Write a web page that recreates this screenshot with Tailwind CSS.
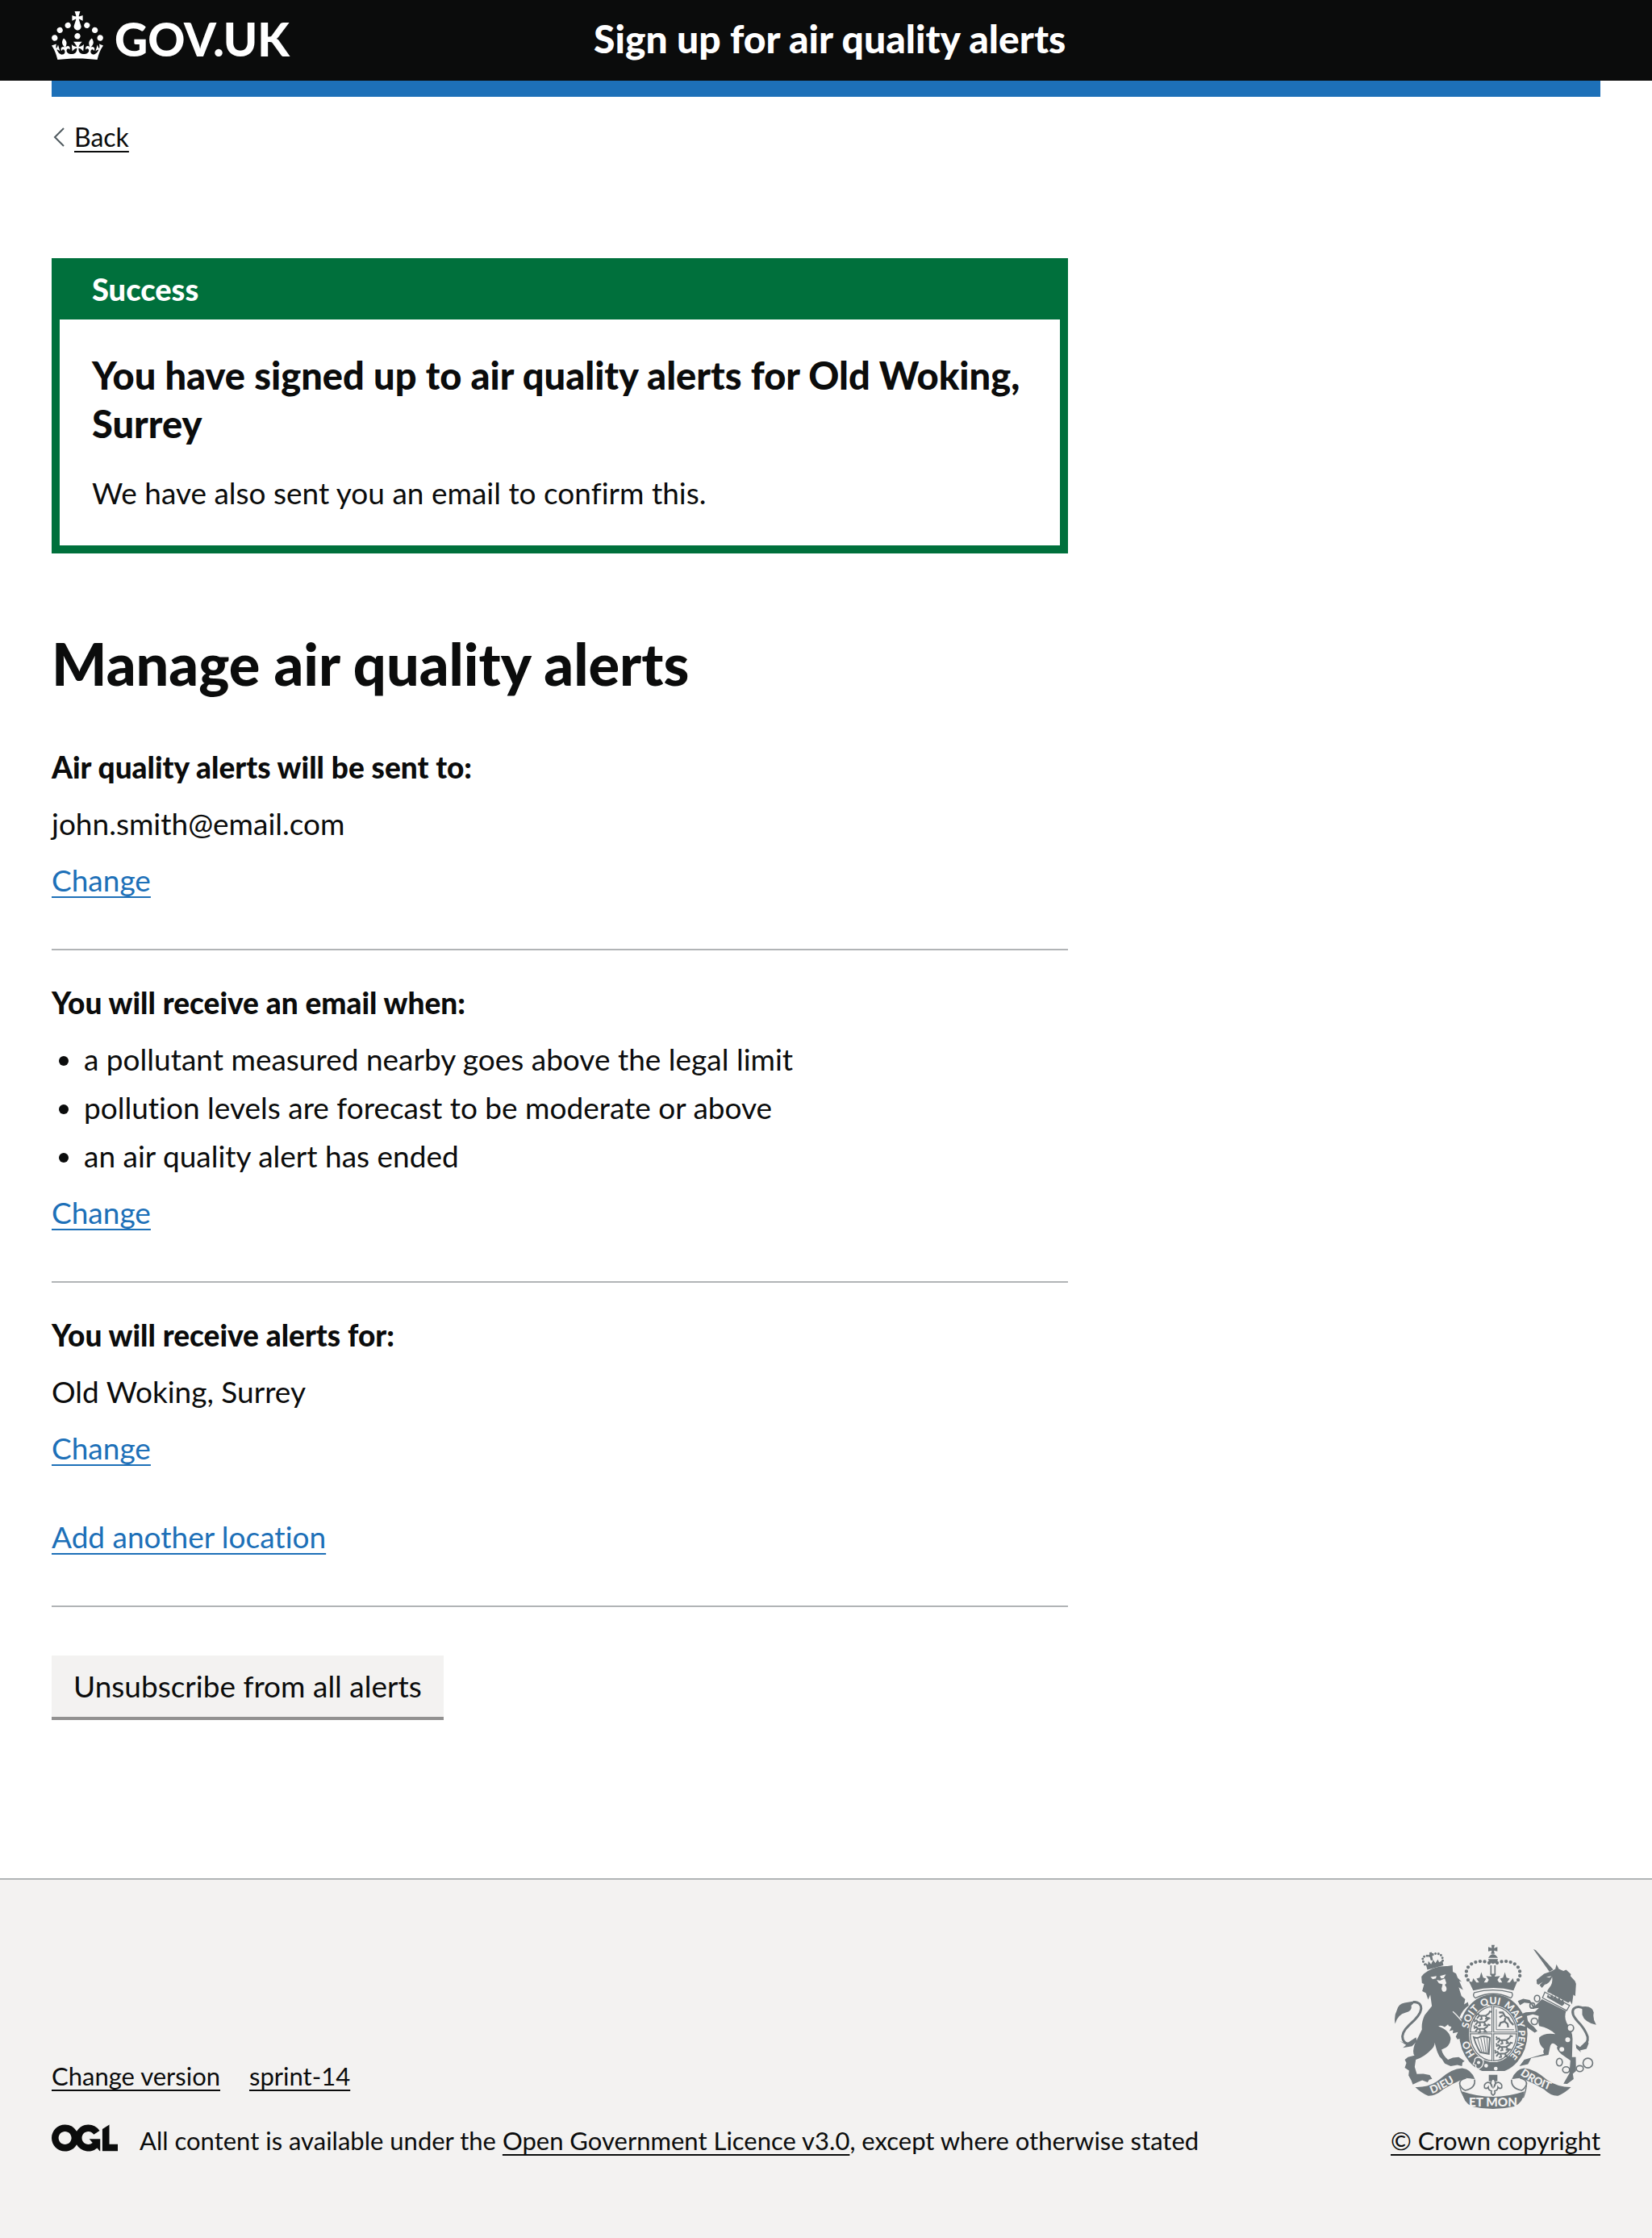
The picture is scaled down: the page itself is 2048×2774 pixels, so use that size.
<!DOCTYPE html>
<html lang="en">
<head>
<meta charset="utf-8">
<meta name="viewport" content="width=device-width, initial-scale=1">
<title>Manage air quality alerts - GOV.UK</title>
<script src="https://cdn.jsdelivr.net/npm/@tailwindcss/browser@4"></script>
</head>
<body class="flex min-h-screen flex-col bg-white font-[Lato,Arial,sans-serif] text-[37px] leading-[50px] text-[#0b0c0c] [font-variant-ligatures:none]">

<header class="bg-[#0b0c0c] text-white">
  <div class="mx-16 flex h-[100px] items-center pb-1 font-black">
    <a href="#" class="flex w-[35%] items-center gap-3.5 text-[57px] leading-none">
      <svg class="mt-[-8px] h-[60px] w-16 shrink-0" viewBox="0 0 32 30" fill="currentColor" aria-hidden="true"><path d="M22.6 10.4c-1 .4-2-.1-2.4-1-.4-.9.1-2 1-2.4.9-.4 2 .1 2.4 1s-.1 2-1 2.4m-5.9 6.7c-.9.4-2-.1-2.4-1-.4-.9.1-2 1-2.4.9-.4 2 .1 2.4 1s-.1 2-1 2.4m10.8-3.7c-1 .4-2-.1-2.4-1-.4-.9.1-2 1-2.4.9-.4 2 .1 2.4 1s0 2-1 2.4m3.3 4.8c-1 .4-2-.1-2.4-1-.4-.9.1-2 1-2.4.9-.4 2 .1 2.4 1s-.1 2-1 2.4M17 4.7l2.3 1.2V2.5l-2.3.7-.2-.2.9-3h-3.4l.9 3-.2.2c-.1.1-2.3-.7-2.3-.7v3.4L15 4.7c.1.1.1.2.2.2l-1.3 4c-.1.2-.1.4-.1.6 0 1.1.8 2 1.9 2.2h.7c1-.2 1.9-1.1 1.9-2.1 0-.2 0-.4-.1-.6l-1.3-4c-.1-.2 0-.2.1-.3m-7.6 5.7c.9.4 2-.1 2.4-1 .4-.9-.1-2-1-2.4-.9-.4-2 .1-2.4 1s0 2 1 2.4m-5 3c.9.4 2-.1 2.4-1 .4-.9-.1-2-1-2.4-.9-.4-2 .1-2.4 1s.1 2 1 2.4m-3.2 4.8c.9.4 2-.1 2.4-1 .4-.9-.1-2-1-2.4-.9-.4-2 .1-2.4 1s0 2 1 2.4m14.8 11c4.4 0 8.6.3 12.3.8 1.1-4.5 2.4-7 3.7-8.8l-2.5-.9c.2 1.3.3 1.9 0 2.7-.4-.4-.8-1.1-1.1-2.3l-1.2 4c.7-.5 1.3-.8 2-.9-1.1 2.5-2.6 3.1-3.5 3-1.1-.2-1.7-1.2-1.5-2.1.3-1.2 1.5-1.5 2.1-.1 1.1-2.3-.8-3-2-2.3 1.9-1.9 2.1-3.5.6-5.6-2.1 1.6-2.1 3.2-1.2 5.5-1.2-1.4-3.2-.6-2.5 1.6.9-1.4 2.1-.5 1.9.8-.2 1.1-1.7 2.1-3.5 1.9-2.7-.2-2.9-2.1-2.9-3.6.7-.1 1.9.5 2.9 1.9l.4-4.3c-1.1 1.1-2.1 1.4-3.2 1.4.4-1.2 2.1-3 2.1-3h-5.4s1.7 1.9 2.1 3c-1.1 0-2.1-.2-3.2-1.4l.4 4.3c1-1.4 2.2-2 2.9-1.9-.1 1.5-.2 3.4-2.9 3.6-1.9.2-3.4-.8-3.5-1.9-.2-1.3 1-2.2 1.9-.8.7-2.3-1.2-3-2.5-1.6.9-2.2.9-3.9-1.2-5.5-1.5 2-1.3 3.7.6 5.6-1.2-.7-3.1 0-2 2.3.6-1.4 1.8-1.1 2.1.1.2.9-.3 1.9-1.5 2.1-.9.2-2.4-.5-3.5-3 .6 0 1.2.3 2 .9l-1.2-4c-.3 1.1-.7 1.9-1.1 2.3-.3-.8-.2-1.4 0-2.7l-2.9.9C1.3 23 2.6 25.5 3.7 30c3.7-.5 7.9-.8 12.3-.8"/></svg>
      <span>GOV.UK</span>
    </a>
    <a href="#" class="text-[48px] leading-none">Sign up for air quality alerts</a>
  </div>
</header>

<div class="mx-16 h-5 bg-[#1d70b8]"></div>

<div class="mx-16 mt-[30px] flex h-10 items-center gap-3 text-[32px] leading-10">
  <svg class="ml-px h-6 w-[15px]" viewBox="0 0 15 24" fill="none" stroke="#505a5f" stroke-width="2" aria-hidden="true"><path d="M14 1 3 12l11 11"/></svg>
  <a href="#" class="underline decoration-2 underline-offset-[5px] [text-decoration-skip-ink:none]">Back</a>
</div>

<main class="mx-16 mt-[130px] grid flex-1 grid-cols-3 gap-15">
  <div class="col-span-2">
    <section class="border-10 border-[#00703c]" aria-labelledby="banner-title">
      <h2 id="banner-title" class="bg-[#00703c] px-10 pt-[3px] pb-[13px] text-[38px] font-black text-white">Success</h2>
      <div class="px-10 pt-[39px] pb-10">
        <h3 class="text-[47px] leading-[60px] font-black">You have signed up to air quality alerts for Old Woking, Surrey</h3>
        <p class="mt-[31px]">We have also sent you an email to confirm this.</p>
      </div>
    </section>

    <h1 class="mt-24 mb-16 text-[72px] leading-[80px] font-black">Manage air quality alerts</h1>

    <section class="flex flex-col items-start gap-5 border-b-2 border-[#b1b4b6] pb-15">
      <h2 class="text-[37px] font-black">Air quality alerts will be sent to:</h2>
      <p>john.smith@email.com</p>
      <a href="#" class="text-[#1d70b8] underline decoration-2 underline-offset-[6px] [text-decoration-skip-ink:none]">Change</a>
    </section>

    <section class="flex flex-col items-start gap-5 border-b-2 border-[#b1b4b6] pt-10 pb-15">
      <h2 class="text-[37px] font-black">You will receive an email when:</h2>
      <ul class="flex list-disc flex-col gap-2.5 pl-10">
        <li>a pollutant measured nearby goes above the legal limit</li>
        <li>pollution levels are forecast to be moderate or above</li>
        <li>an air quality alert has ended</li>
      </ul>
      <a href="#" class="text-[#1d70b8] underline decoration-2 underline-offset-[6px] [text-decoration-skip-ink:none]">Change</a>
    </section>

    <section class="flex flex-col items-start gap-5 border-b-2 border-[#b1b4b6] pt-10 pb-15">
      <h2 class="text-[37px] font-black">You will receive alerts for:</h2>
      <p>Old Woking, Surrey</p>
      <a href="#" class="text-[#1d70b8] underline decoration-2 underline-offset-[6px] [text-decoration-skip-ink:none]">Change</a>
      <a href="#" class="mt-10 text-[#1d70b8] underline decoration-2 underline-offset-[6px] [text-decoration-skip-ink:none]">Add another location</a>
    </section>

    <button type="button" class="mt-15 block border-b-4 border-[#929191] bg-[#f3f2f1] px-[27px] py-[13px]">Unsubscribe from all alerts</button>
  </div>
</main>

<footer class="mt-[196px] border-t-2 border-[#b1b4b6] bg-[#f3f2f1] px-16 pt-20 pb-[101px] text-[31px] leading-10">
  <div class="flex items-end justify-between">
    <div class="flex flex-col gap-10">
      <nav class="flex gap-9" aria-label="Footer">
        <a href="#" class="underline decoration-2 underline-offset-[5px] [text-decoration-skip-ink:none]">Change version</a>
        <a href="#" class="underline decoration-2 underline-offset-[5px] [text-decoration-skip-ink:none]">sprint-14</a>
      </nav>
      <div class="flex items-start gap-[27px]">
        <svg class="h-[34px] w-[82px] shrink-0" viewBox="0 0 483.2 195.7" fill="currentColor" aria-hidden="true"><path d="M421.5 142.8V.1l-50.7 32.3v161.1h112.4v-50.7zm-122.3-9.6A47.12 47.12 0 0 1 221 97.8c0-26 21.1-47.1 47.1-47.1 16.7 0 31.4 8.7 39.7 21.8l42.7-27.2A97.63 97.63 0 0 0 268.1 0c-36.5 0-68.3 20.1-85.1 49.7A98 98 0 0 0 97.8 0C43.9 0 0 43.9 0 97.8s43.9 97.8 97.8 97.8c36.5 0 68.3-20.1 85.1-49.7a97.76 97.76 0 0 0 149.6 25.4l19.4 22.2h3v-87.8h-80l24.3 27.5zM97.8 145c-26 0-47.1-21.1-47.1-47.1s21.1-47.1 47.1-47.1 47.1 21.1 47.1 47.1S123.8 145 97.8 145"/></svg>
        <p>All content is available under the <a href="#" class="underline decoration-2 underline-offset-[5px] [text-decoration-skip-ink:none]">Open Government Licence v3.0</a>, except where otherwise stated</p>
      </div>
    </div>
    <div class="flex flex-col items-center gap-[18px]">
      <!-- Royal coat of arms -->
      <svg class="h-[205px] w-[250px]" viewBox="84 58 750 616" fill="#6f777b" stroke="none" aria-hidden="true">
        <defs>
          <path id="garter" d="M451 501A94 110 0 0 1 451 281A94 110 0 0 1 451 501"/>
          <path id="dieu" d="M222 614Q275 594 340 548"/>
          <path id="droit" d="M550 543Q616 592 710 616"/>
          <g id="passant" fill="none" stroke="#6f777b" stroke-width="6">
            <path d="M0 8l10-5 6 7h22l12-8M14 10l-8 10M22 12l2 10-8 2M38 11l8 10h-10M50 2l4-8 8 2M4 2l-4-5"/>
          </g>
        </defs>
        <!-- lion's crown -->
        <path d="M196 133C180 112 188 98 215 101M215 101C240 84 265 92 262 122" fill="none" stroke="#6f777b" stroke-width="9" stroke-linecap="round" stroke-dasharray="0 11"/>
        <path d="M213 88l9-1 0 6 6-1 1 8-6 1 3 16-8 1-4-14-6 1-1-7 6-2z"/>
        <path d="M198 126l9 8 2-14 10 12 8-16 8 12 9-14 5 11 12-7 4 18-60 17z"/>
        <!-- lion -->
        <path d="M183 178l9-10 14-10Q236 138 280 139L299 136l1 24 12 7 6 16 15 15-9-3 14 33-16-10 10 32 14 12-4 20 14-9 3 13Q338 298 325 330L345 345Q354 368 358 385l-4 30-12-10 2 16-14-12-13 3-6-10 8-17-19 4 1-12-14 4 8-16-10-3-3-6-12 10Q256 358 246 363Q290 380 292 410Q290 440 258 450Q262 470 282 488l18-8 22-2 22 15-8 5-2 14-17-5-25 5-22-10-10-16-10-10Q232 440 232 410Q236 425 228 440Q202 474 162 488L158 515l8 26 24-1 24 5 9 14-11 3-6 10-20-8-18 8-17 8-6-16-10-18 2-18-16-10 6-18-6-12 12-10 24-6Q148 460 158 430L185 375Q182 350 195 322L222 288l-6-42-8 18-8-24-14-8 7-26-8-4z"/>
        <path d="M217 180l22-4-2 9-12 3zM252 176l22-6-8 14-10 1zM240 190l12 3 18-8 6 18-6 6q12 14 3 24q-12 6-15-10l4-16-14-4z" fill="#f3f2f1"/>
        <path d="M300 308Q325 330 352 370" fill="none" stroke="#f3f2f1" stroke-width="4"/>
        <path d="M150 427Q122 434 114 412Q106 388 138 358Q180 322 182 298Q182 272 152 273" fill="none" stroke="#6f777b" stroke-width="9"/>
        <path d="M85 354Q80 325 92 302Q98 280 120 276L164 268L145 286Q150 306 125 312Q94 320 85 354ZM102 418l24 10 37-24 3 15-18 18-34 6 12-10z"/>
        <!-- unicorn -->
        <path d="M600 76l9 4 65 72-14 8zM612 190L640 168l28-10 14-8 4-18 9 18 17 7 10-4 18 16-2 7 17 19 4 10-3 46-7-5-5 36-7-12-7 6L660 238Q645 238 658 222Q674 205 670 180Q660 206 642 208l-10 12-9-10 12-12-16 10-6-3z"/>
        <path d="M648 180l20-4-8 6z" fill="#f3f2f1"/>
        <path d="M643 236l92 50-11 19-90-48z" fill="#f3f2f1" stroke="#6f777b" stroke-width="4"/>
        <path d="M650 255l4-10 8 9 8-10 4 14 9-8 5 14 9-9 5 15 9-8 4 18-8 8z"/>
        <path d="M632 262L722 307Q714 330 724 350Q746 380 746 410L744 478h14l1 52-12 10 3 20-24 18-14-1 22-38 4-48-34-24Q682 446 690 438Q668 414 662 440L656 470l-64 12-12 22-32 8 18-24 74-22Q634 458 640 448Q618 430 622 405Q640 386 682 392Q660 370 622 362Q616 345 620 325l-22-6-22 6 4 22 22 18 13 16-10 6-26-18-16-28-11-22 20-8 34-2 15-14-21 3-10-20-24-3-16 10-8-16 20-8 24 4 18 24z"/>
        <g fill="#f3f2f1"><circle cx="728" cy="413" r="9"/><circle cx="706" cy="449" r="9"/></g>
        <g fill="none" stroke="#6f777b" stroke-width="5">
          <ellipse cx="614" cy="260" rx="10" ry="12"/><ellipse cx="596" cy="286" rx="9" ry="10"/><ellipse cx="604" cy="345" rx="12" ry="12"/>
          <ellipse cx="738" cy="370" rx="12" ry="13" fill="#f3f2f1"/><ellipse cx="697" cy="497" rx="11" ry="14"/><ellipse cx="722" cy="525" rx="13" ry="11"/><ellipse cx="773" cy="521" rx="13" ry="11"/><circle cx="803" cy="500" r="18"/>
        </g>
        <path d="M780 440Q806 430 802 402Q792 372 765 345Q738 315 750 298Q765 284 790 298" fill="none" stroke="#6f777b" stroke-width="9"/>
        <path d="M782 290Q820 285 825 312Q820 336 834 358Q790 348 782 320ZM758 430l16 10 26-25 6 12-8 20-24 6 4 8-18-16z"/>
        <!-- garter and shield -->
        <ellipse cx="451" cy="391" rx="127" ry="147"/>
        <ellipse cx="451" cy="391" rx="91" ry="106" fill="#f3f2f1"/>
        <ellipse cx="451" cy="391" rx="86" ry="101" fill="none" stroke="#6f777b" stroke-width="4"/>
        <path d="M449 288v204M362 388h178" stroke="#6f777b" stroke-width="10"/>
        <path d="M449 288v204M362 388h178" stroke="#f3f2f1" stroke-width="3"/>
        <use href="#passant" x="384" y="314"/><use href="#passant" x="378" y="338"/><use href="#passant" x="378" y="363"/>
        <use href="#passant" x="461" y="405"/><use href="#passant" x="461" y="430"/><use href="#passant" x="456" y="455"/>
        <path d="M462 300v76h66" fill="none" stroke="#6f777b" stroke-width="3"/>
        <path d="M472 312l14 0 8 14 12 6 8 14 12 12M496 332l-4 14-14 4-6 14M494 346l10 8 2 14M486 322l-12 8" fill="none" stroke="#6f777b" stroke-width="7"/>
        <path d="M378 404Q392 410 402 402Q420 398 438 406L434 466L402 460Q384 430 378 404Z" fill="none" stroke="#6f777b" stroke-width="6"/>
        <path d="M392 408l16 50M404 406l12 54M416 404l8 58M427 404l3 58" stroke="#6f777b" stroke-width="3"/>
        <g font-family="Lato, sans-serif" font-weight="900" font-size="37" fill="#f3f2f1">
          <text><textPath href="#garter" startOffset="12%">HO</textPath></text>
          <text><textPath href="#garter" startOffset="28%">SOIT</textPath></text>
          <text><textPath href="#garter" startOffset="43%">QUI</textPath></text>
          <text><textPath href="#garter" startOffset="56%">MALY</textPath></text>
          <text font-size="34"><textPath href="#garter" startOffset="73%">PENSE</textPath></text>
        </g>
        <path d="M322 398l34-12 2 24-14-4-2 14-18-12zM562 346l13-8 20 24-22 8z"/>
        <path d="M392 478q22 4 22 18q-2 20-18 26q-14-4-10-14l-10-4 6-14q-2-8 10-12z" stroke="#f3f2f1" stroke-width="4"/>
        <g fill="#f3f2f1"><circle cx="396" cy="498" r="6"/><circle cx="424" cy="510" r="7"/><circle cx="460" cy="521" r="7"/></g>
        <!-- crown -->
        <path d="M444 60h12l-3 12 13-4v16l-13-3 3 12h-14l3-12-13 3V68l13 4z"/>
        <path d="M432 108q17-26 36 0zM432 113h36q0 14-18 18q-18-4-18-18z"/>
        <path d="M442 136v36M457 136v36" stroke="#6f777b" stroke-width="5"/>
        <path d="M435 127Q395 112 362 136Q336 170 364 200M465 127Q505 112 538 136Q564 170 536 200" fill="none" stroke="#6f777b" stroke-width="13" stroke-linecap="round" stroke-dasharray="0 17"/>
        <path d="M360 196l12 2 4-14 12 16h10l-10-14 12-4 6-20 7 20 11 4-8 14h12l6-10-10-14 20 2-4-10h20l-4 10 20-2-10 14 6 10h12l-8-14 11-4 7-20 6 20 12 4-10 14h10l12-16 4 14 12-2-14 34q-74-20-150 0z"/>
        <path d="M380 238Q449 218 520 238Q526 250 516 258Q449 226 384 258Q372 250 380 238Z" fill="#f3f2f1" stroke="#6f777b" stroke-width="4"/>
        <!-- motto ribbon -->
        <path d="M325 575Q328 612 345 628L563 628Q574 600 575 575" fill="none" stroke="#6f777b" stroke-width="4"/>
        <path d="M325 570Q322 590 345 612Q449 642 556 612Q578 590 575 570L566 530L334 530Z" fill="#f3f2f1"/>
        <path d="M160 590Q215 592 252 560Q295 520 335 519Q368 522 382 560L346 556Q300 576 264 598Q236 624 208 622Q182 612 160 590ZM740 590Q690 590 650 562Q605 522 566 519Q534 522 520 560L556 556Q602 576 640 598Q666 624 692 622Q718 612 740 590Z"/>
        <path d="M350 556Q322 562 326 580Q332 596 346 602Q386 594 381 562M550 556Q578 562 574 580Q568 596 556 602Q516 594 519 562" fill="#f3f2f1" stroke="#6f777b" stroke-width="5"/>
        <path d="M334 606Q449 646 567 606Q562 650 528 662Q449 680 372 662Q340 650 334 606Z"/>
        <path d="M434 544h32v24h-32z"/>
        <path d="M450 556q16 18 4 32q2-16 16-16q16 6 12 20q-8 6-14-2q0 12-12 14q4 10-6 16q-10-6-6-16q-12-2-12-14q-6 8-14 2q-4-14 12-20q14 0 16 16q-12-14 4-32z" fill="#f3f2f1" stroke="#6f777b" stroke-width="5"/>
        <g font-family="Lato, sans-serif" font-weight="900" font-size="40" fill="#f3f2f1">
          <text><textPath href="#dieu">DIEU</textPath></text>
          <text><textPath href="#droit">DROIT</textPath></text>
          <text x="450" y="663" text-anchor="middle" font-size="46">ET MON</text>
        </g>
      </svg>
      <a href="#" class="underline decoration-2 underline-offset-[5px] [text-decoration-skip-ink:none]">© Crown copyright</a>
    </div>
  </div>
</footer>
</body>
</html>
